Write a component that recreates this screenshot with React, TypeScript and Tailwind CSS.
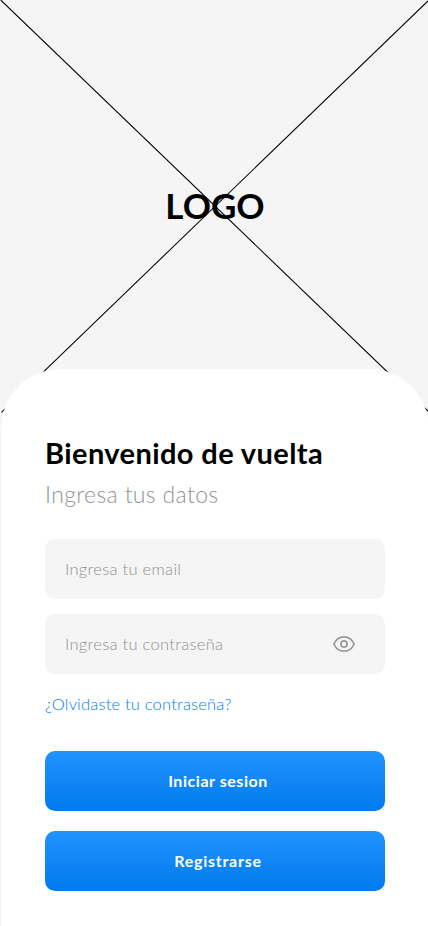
function EyeIcon() {
  return (
    <svg className="h-6 w-6" viewBox="0 0 24 24" fill="none" stroke="#9b9b9b" strokeWidth="1.8">
      <path d="M1.9 12C3.8 7.6 7.5 4.9 12 4.9S20.2 7.6 22.1 12C20.2 16.4 16.5 19.1 12 19.1S3.8 16.4 1.9 12Z" strokeLinejoin="round" />
      <circle cx="12" cy="12" r="3.1" />
    </svg>
  );
}

export default function App() {
  return (
    <main className="relative flex h-[926px] w-[428px] flex-col overflow-hidden bg-[#f5f5f5] font-[Lato,sans-serif]">
      <svg className="absolute top-0 left-0 h-[413px] w-[428px]" viewBox="0 0 428 413" stroke="#000" strokeWidth="1.05">
        <path d="M.7 0 428 411M1.5 412.3 428 1" />
      </svg>
      <header className="relative flex h-[369px] shrink-0 justify-center pt-[183px] pl-[2px]">
        <h1 className="h-11 text-[35px] leading-[44px] font-bold whitespace-nowrap">LOGO</h1>
      </header>
      <section className="relative ml-px flex w-[428px] grow flex-col rounded-t-[60px] bg-white px-[44px] pt-[66px]">
        <h2 className="h-9 text-[29px] leading-9 font-bold tracking-[0.4px] whitespace-nowrap">Bienvenido de vuelta</h2>
        <p className="mt-[9px] h-7 text-[23px] leading-7 font-light tracking-[0.35px] whitespace-nowrap text-[#939393]">Ingresa tus datos</p>
        <form className="mt-[31px] flex w-[340px] flex-col">
          <div className="flex h-[60px] items-center rounded-[10px] bg-[#f5f5f5] pl-5 text-[16.5px] font-light tracking-[0.3px] text-[#8f8f8f]">
            <span>Ingresa tu email</span>
          </div>
          <div className="mt-[15px] flex h-[60px] items-center justify-between rounded-[10px] bg-[#f5f5f5] pr-[29px] pl-5 text-[16.5px] font-light tracking-[0.3px] text-[#8f8f8f]">
            <span>Ingresa tu contraseña</span>
            <EyeIcon />
          </div>
          <a className="mt-5 h-5 text-[16.5px] leading-5 font-light tracking-[0.2px] whitespace-nowrap text-[#0080f5]">
            <span>¿Olvidaste tu contraseña?</span>
          </a>
          <button type="button" className="mt-[37px] h-[60px] rounded-[10px] bg-linear-to-b from-[#1f93ff] to-[#007bed] pl-[6px] text-[16px] font-bold tracking-[0.55px] text-white">
            <span>Iniciar sesion</span>
          </button>
          <button type="button" className="mt-5 h-[60px] rounded-[10px] bg-linear-to-b from-[#1f93ff] to-[#007bed] pl-[6px] text-[16px] font-bold tracking-[0.75px] text-white">
            <span>Registrarse</span>
          </button>
        </form>
      </section>
    </main>
  );
}
